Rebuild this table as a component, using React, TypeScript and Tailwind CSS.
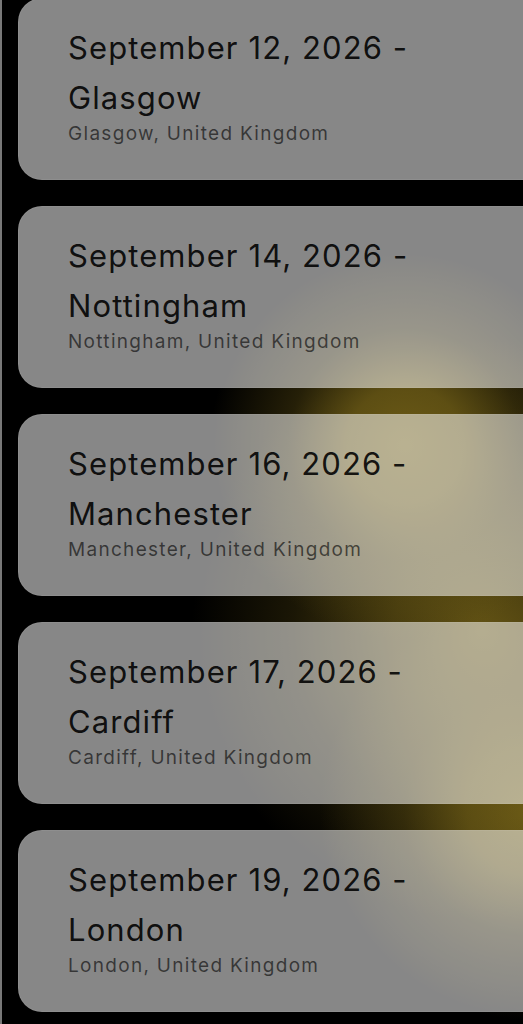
import React from "react";

const events = [
  { date: "September 12, 2026", city: "Glasgow" },
  { date: "September 14, 2026", city: "Nottingham" },
  { date: "September 16, 2026", city: "Manchester" },
  { date: "September 17, 2026", city: "Cardiff" },
  { date: "September 19, 2026", city: "London" },
];

export default function App() {
  return (
    <div
      className="h-[1024px] w-[523px] overflow-hidden bg-black border-l-2 border-[#787878] bg-[radial-gradient(circle_195px_at_403px_445px,#6b5a16_0%,rgba(107,90,22,0.85)_30%,rgba(107,90,22,0.35)_60%,transparent_100%),radial-gradient(circle_290px_at_480px_630px,rgba(107,90,22,0.9)_0%,rgba(107,90,22,0.65)_30%,rgba(107,90,22,0.25)_65%,transparent_100%),radial-gradient(circle_210px_at_528px_810px,#6b5a16_0%,rgba(107,90,22,0.8)_30%,rgba(107,90,22,0.35)_60%,transparent_100%)]"
      style={{ fontFamily: "Inter, 'Noto Sans', sans-serif" }}
    >
      <div className="mt-[-2px] flex flex-col gap-[26px] pl-4">
        {events.map((e) => (
          <div
            key={e.city}
            className="w-[560px] shrink-0 rounded-3xl border border-white/[0.06] bg-white/[0.53] pl-[49px] pt-[24px] pb-[31px]"
          >
            <div className="text-[31px] leading-[50px] tracking-[1.1px] text-black/90">
              {e.date} -
              <br />
              {e.city}
            </div>
            <div className="-mt-[3px] text-[19px] leading-[28px] tracking-[1.3px] text-black/60">
              {e.city}, United Kingdom
            </div>
          </div>
        ))}
      </div>
    </div>
  );
}
